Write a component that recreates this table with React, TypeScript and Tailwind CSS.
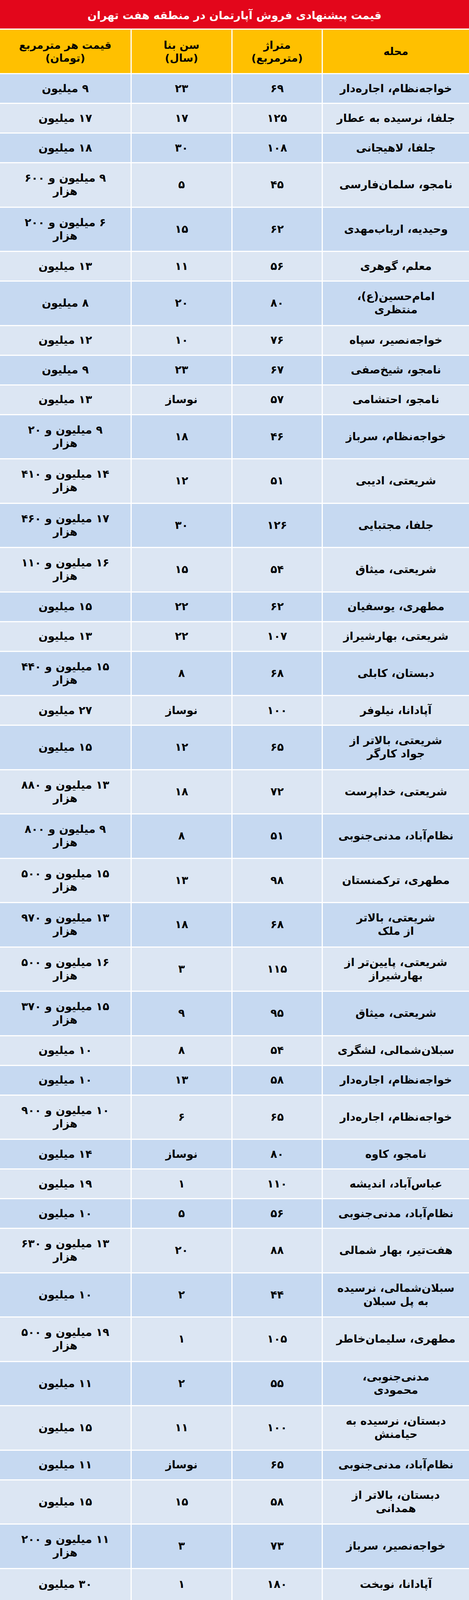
import React from "react";

type Row = {
  area: string[];
  size: string;
  age: string;
  price: string[];
};

const rows: Row[] = [
  { area: ["خواجه‌نظام، اجاره‌دار"], size: "۶۹", age: "۲۳", price: ["۹ میلیون"] },
  { area: ["جلفا، نرسیده به عطار"], size: "۱۲۵", age: "۱۷", price: ["۱۷ میلیون"] },
  { area: ["جلفا، لاهیجانی"], size: "۱۰۸", age: "۳۰", price: ["۱۸ میلیون"] },
  { area: ["نامجو، سلمان‌فارسی"], size: "۴۵", age: "۵", price: ["۹ میلیون و ۶۰۰", "هزار"] },
  { area: ["وحیدیه، ارباب‌مهدی"], size: "۶۲", age: "۱۵", price: ["۶ میلیون و ۲۰۰", "هزار"] },
  { area: ["معلم، گوهری"], size: "۵۶", age: "۱۱", price: ["۱۳ میلیون"] },
  { area: ["امام‌حسین(ع)،", "منتظری"], size: "۸۰", age: "۲۰", price: ["۸ میلیون"] },
  { area: ["خواجه‌نصیر، سپاه"], size: "۷۶", age: "۱۰", price: ["۱۲ میلیون"] },
  { area: ["نامجو، شیخ‌صفی"], size: "۶۷", age: "۲۳", price: ["۹ میلیون"] },
  { area: ["نامجو، احتشامی"], size: "۵۷", age: "نوساز", price: ["۱۳ میلیون"] },
  { area: ["خواجه‌نظام، سرباز"], size: "۴۶", age: "۱۸", price: ["۹ میلیون و ۲۰", "هزار"] },
  { area: ["شریعتی، ادیبی"], size: "۵۱", age: "۱۲", price: ["۱۴ میلیون و ۴۱۰", "هزار"] },
  { area: ["جلفا، مجتبایی"], size: "۱۲۶", age: "۳۰", price: ["۱۷ میلیون و ۴۶۰", "هزار"] },
  { area: ["شریعتی، میثاق"], size: "۵۴", age: "۱۵", price: ["۱۶ میلیون و ۱۱۰", "هزار"] },
  { area: ["مطهری، یوسفیان"], size: "۶۲", age: "۲۲", price: ["۱۵ میلیون"] },
  { area: ["شریعتی، بهارشیراز"], size: "۱۰۷", age: "۲۲", price: ["۱۳ میلیون"] },
  { area: ["دبستان، کابلی"], size: "۶۸", age: "۸", price: ["۱۵ میلیون و ۴۴۰", "هزار"] },
  { area: ["آپادانا، نیلوفر"], size: "۱۰۰", age: "نوساز", price: ["۲۷ میلیون"] },
  { area: ["شریعتی، بالاتر از", "جواد کارگر"], size: "۶۵", age: "۱۲", price: ["۱۵ میلیون"] },
  { area: ["شریعتی، خداپرست"], size: "۷۲", age: "۱۸", price: ["۱۳ میلیون و ۸۸۰", "هزار"] },
  { area: ["نظام‌آباد، مدنی‌جنوبی"], size: "۵۱", age: "۸", price: ["۹ میلیون و ۸۰۰", "هزار"] },
  { area: ["مطهری، ترکمنستان"], size: "۹۸", age: "۱۳", price: ["۱۵ میلیون و ۵۰۰", "هزار"] },
  { area: ["شریعتی، بالاتر", "از ملک"], size: "۶۸", age: "۱۸", price: ["۱۳ میلیون و ۹۷۰", "هزار"] },
  { area: ["شریعتی، پایین‌تر از", "بهارشیراز"], size: "۱۱۵", age: "۳", price: ["۱۶ میلیون و ۵۰۰", "هزار"] },
  { area: ["شریعتی، میثاق"], size: "۹۵", age: "۹", price: ["۱۵ میلیون و ۳۷۰", "هزار"] },
  { area: ["سبلان‌شمالی، لشگری"], size: "۵۴", age: "۸", price: ["۱۰ میلیون"] },
  { area: ["خواجه‌نظام، اجاره‌دار"], size: "۵۸", age: "۱۳", price: ["۱۰ میلیون"] },
  { area: ["خواجه‌نظام، اجاره‌دار"], size: "۶۵", age: "۶", price: ["۱۰ میلیون و ۹۰۰", "هزار"] },
  { area: ["نامجو، کاوه"], size: "۸۰", age: "نوساز", price: ["۱۴ میلیون"] },
  { area: ["عباس‌آباد، اندیشه"], size: "۱۱۰", age: "۱", price: ["۱۹ میلیون"] },
  { area: ["نظام‌آباد، مدنی‌جنوبی"], size: "۵۶", age: "۵", price: ["۱۰ میلیون"] },
  { area: ["هفت‌تیر، بهار شمالی"], size: "۸۸", age: "۲۰", price: ["۱۳ میلیون و ۶۳۰", "هزار"] },
  { area: ["سبلان‌شمالی، نرسیده", "به پل سبلان"], size: "۴۴", age: "۲", price: ["۱۰ میلیون"] },
  { area: ["مطهری، سلیمان‌خاطر"], size: "۱۰۵", age: "۱", price: ["۱۹ میلیون و ۵۰۰", "هزار"] },
  { area: ["مدنی‌جنوبی،", "محمودی"], size: "۵۵", age: "۲", price: ["۱۱ میلیون"] },
  { area: ["دبستان، نرسیده به", "حیامنش"], size: "۱۰۰", age: "۱۱", price: ["۱۵ میلیون"] },
  { area: ["نظام‌آباد، مدنی‌جنوبی"], size: "۶۵", age: "نوساز", price: ["۱۱ میلیون"] },
  { area: ["دبستان، بالاتر از", "همدانی"], size: "۵۸", age: "۱۵", price: ["۱۵ میلیون"] },
  { area: ["خواجه‌نصیر، سرباز"], size: "۷۳", age: "۳", price: ["۱۱ میلیون و ۲۰۰", "هزار"] },
  { area: ["آپادانا، نوبخت"], size: "۱۸۰", age: "۱", price: ["۳۰ میلیون"] },
];

function Lines({ lines }: { lines: string[] }) {
  return (
    <>
      {lines.map((l, i) => (
        <div key={i}>{l}</div>
      ))}
    </>
  );
}

export default function App() {
  return (
    <div className="w-[1200px] bg-white flex flex-col gap-[3px] font-['DejaVu_Sans',sans-serif] text-black">
      {/* Title */}
      <div className="h-[73px] bg-[#e3061b] flex items-center justify-center pt-[6px]">
        <h1 dir="rtl" className="text-white font-bold text-[28px]">
          قیمت پیشنهادی فروش آپارتمان در منطقه هفت تهران
        </h1>
      </div>

      {/* Column headers */}
      <div
        dir="rtl"
        className="grid grid-cols-[374px_228px_255px_334px] gap-x-[3px] h-[111px] font-bold text-[27px] leading-[33px] text-center"
      >
        <div className="bg-[#ffc000] flex flex-col items-center justify-center">محله</div>
        <div className="bg-[#ffc000] flex flex-col items-center justify-center">
          <div>متراژ</div>
          <div>(مترمربع)</div>
        </div>
        <div className="bg-[#ffc000] flex flex-col items-center justify-center">
          <div>سن بنا</div>
          <div>(سال)</div>
        </div>
        <div className="bg-[#ffc000] flex flex-col items-center justify-center">
          <div>قیمت هر مترمربع</div>
          <div>(تومان)</div>
        </div>
      </div>

      {/* Rows */}
      {rows.map((r, i) => {
        const double = r.area.length > 1 || r.price.length > 1;
        const last = i === rows.length - 1;
        const height = last ? "h-[79px]" : double ? "h-[110.5px]" : "h-[73px]";
        const bg = i % 2 === 0 ? "bg-[#c6d9f1]" : "bg-[#dce6f3]";
        return (
          <div
            key={i}
            dir="rtl"
            className={`grid grid-cols-[374px_228px_255px_334px] gap-x-[3px] ${height} font-bold text-[28px] leading-[34px] text-center`}
          >
            <div className={`${bg} flex flex-col items-center justify-center`}>
              <Lines lines={r.area} />
            </div>
            <div className={`${bg} flex flex-col items-center justify-center`}>{r.size}</div>
            <div className={`${bg} flex flex-col items-center justify-center`}>{r.age}</div>
            <div className={`${bg} flex flex-col items-center justify-center`}>
              <Lines lines={r.price} />
            </div>
          </div>
        );
      })}
    </div>
  );
}
